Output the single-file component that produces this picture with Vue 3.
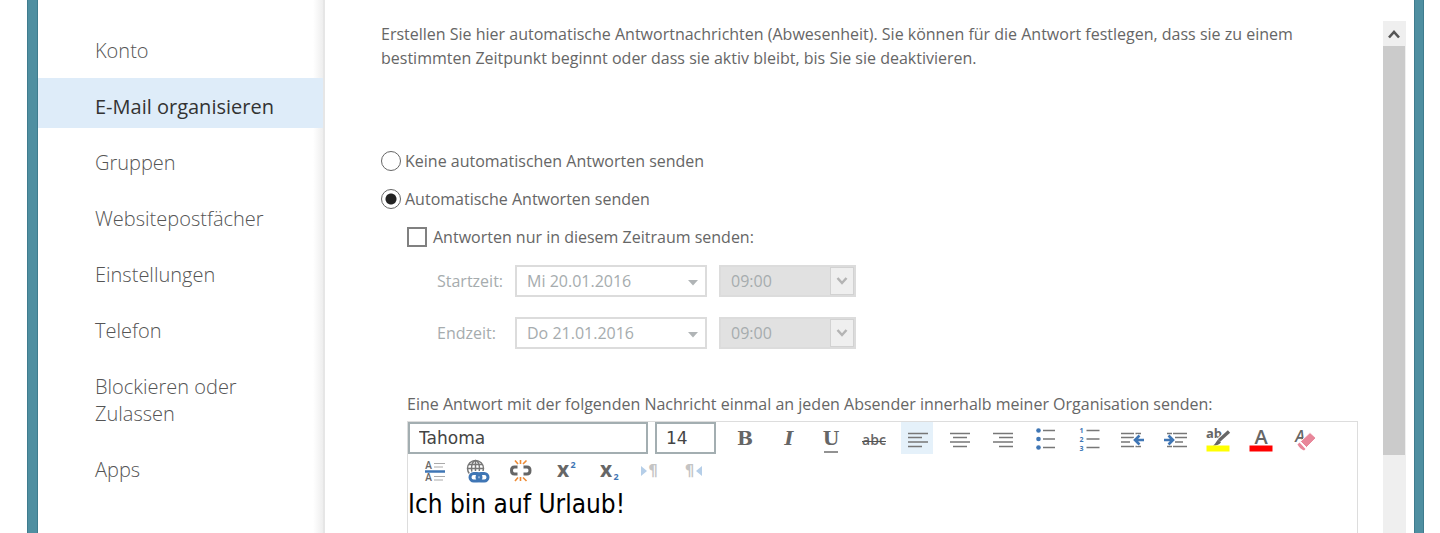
<script setup>
import { ref } from 'vue'

const navItems = [
  { id: 'konto', label: 'Konto' },
  { id: 'organisieren', label: 'E-Mail organisieren' },
  { id: 'gruppen', label: 'Gruppen' },
  { id: 'website', label: 'Websitepostfächer' },
  { id: 'einstellungen', label: 'Einstellungen' },
  { id: 'telefon', label: 'Telefon' },
  { id: 'blockieren', label: 'Blockieren oder Zulassen' },
  { id: 'apps', label: 'Apps' },
]

const tools = [
  { icon: 'bold', title: 'Fett' },
  { icon: 'italic', title: 'Kursiv' },
  { icon: 'underline', title: 'Unterstrichen' },
  { icon: 'strike', title: 'Durchgestrichen' },
  { icon: 'left', title: 'Linksbündig' },
  { icon: 'center', title: 'Zentriert' },
  { icon: 'right', title: 'Rechtsbündig' },
  { icon: 'bullets', title: 'Aufzählung' },
  { icon: 'numbers', title: 'Nummerierung' },
  { icon: 'outdent', title: 'Einzug verkleinern' },
  { icon: 'indent', title: 'Einzug vergrößern' },
  { icon: 'highlight', title: 'Hervorheben' },
  { icon: 'color', title: 'Schriftfarbe' },
  { icon: 'eraser', title: 'Formatierung löschen' },
  { icon: 'rule', title: 'Horizontale Linie' },
  { icon: 'link', title: 'Link einfügen' },
  { icon: 'unlink', title: 'Link entfernen' },
  { icon: 'sup', title: 'Hochgestellt' },
  { icon: 'sub', title: 'Tiefgestellt' },
  { icon: 'ltr', title: 'Von links nach rechts', disabled: true },
  { icon: 'rtl', title: 'Von rechts nach links', disabled: true },
]

// Line groups of the paragraph icons
const linePaths = {
  left: 'M7 11.5h20M7 15.5h14M7 20h20M7 24.5h14',
  center: 'M6 11.5h20M9 15.5h14M6 20h20M9 24.5h14',
  right: 'M6 11.5h20M12 15.5h14M6 20h20M12 24.5h14',
  bullets: 'M13 8.5h12M13 17h12M13 25.5h12',
  numbers: 'M13.5 8.5h13M13.5 17h13M13.5 25.5h13',
  outdent: 'M5 11.5h13M19.5 11.5h5.5M5 15.5h13M5 20h9M5 24.5h13M19.5 24.5h5.5',
  indent: 'M8 11.5h5M14 11.5h14M16 15.5h12M16 20h8M8 24.5h5M14 24.5h14',
}

const active = ref('organisieren')
const mode = ref('auto')
const onlyPeriod = ref(false)
const align = ref('left')
const fontName = ref('Tahoma')
const fontSize = ref('14')

const periods = [
  { id: 'start', label: 'Startzeit:', date: 'Mi 20.01.2016', time: '09:00' },
  { id: 'end', label: 'Endzeit:', date: 'Do 21.01.2016', time: '09:00' },
]

function useTool(icon) {
  if (['left', 'center', 'right'].includes(icon)) align.value = icon
}
</script>

<template>
  <div class="window">
    <nav class="nav" aria-label="Optionen">
      <a
        v-for="item in navItems"
        :key="item.id"
        href="#"
        class="nav__item"
        :class="{ 'nav__item--active': item.id === active }"
        @click.prevent="active = item.id"
      >{{ item.label }}</a>
    </nav>

    <main class="content">
      <p class="intro">
        Erstellen Sie hier automatische Antwortnachrichten (Abwesenheit). Sie können für die Antwort festlegen, dass sie zu einem
        bestimmten Zeitpunkt beginnt oder dass sie aktiv bleibt, bis Sie sie deaktivieren.
      </p>

      <label class="choice">
        <input v-model="mode" type="radio" name="mode" value="none" class="radio" />
        Keine automatischen Antworten senden
      </label>
      <label class="choice">
        <input v-model="mode" type="radio" name="mode" value="auto" class="radio" />
        Automatische Antworten senden
      </label>

      <div class="details">
        <label class="choice choice--check">
          <input v-model="onlyPeriod" type="checkbox" class="check" />
          Antworten nur in diesem Zeitraum senden:
        </label>

        <div v-for="p in periods" :key="p.id" class="period">
          <label :for="p.id" class="period__label">{{ p.label }}</label>
          <span class="pick pick--date">
            <select :id="p.id" class="pick__field" :disabled="!onlyPeriod">
              <option>{{ p.date }}</option>
            </select>
            <svg class="pick__caret" width="12" height="6" viewBox="0 0 12 6" aria-hidden="true">
              <path d="M1 0h10L6 5.5z" fill="#b0b4b6" />
            </svg>
          </span>
          <span class="pick pick--time">
            <select class="pick__field" :aria-label="p.label + ' Uhrzeit'" :disabled="!onlyPeriod">
              <option>{{ p.time }}</option>
            </select>
            <span class="pick__arrow">
              <svg width="12" height="10" viewBox="0 0 12 10" aria-hidden="true">
                <path d="M1.5 2L6 7l4.5-5" fill="none" stroke="#b4b4b4" stroke-width="2.5" />
              </svg>
            </span>
          </span>
        </div>

        <p id="reply-label" class="reply-label">
          Eine Antwort mit der folgenden Nachricht einmal an jeden Absender innerhalb meiner Organisation senden:
        </p>

        <div class="editor">
          <div class="toolbar" role="toolbar" aria-label="Formatierung">
            <input v-model="fontName" class="combo combo--font" aria-label="Schriftart" />
            <input v-model="fontSize" class="combo combo--size" aria-label="Schriftgrad" />
            <button
              v-for="t in tools"
              :key="t.icon"
              type="button"
              class="tool"
              :class="{ 'tool--on': t.icon === align }"
              :title="t.title"
              :disabled="t.disabled"
              @click="useTool(t.icon)"
            >
              <svg width="32" height="32" viewBox="0 0 32 32" aria-hidden="true">
                <path v-if="linePaths[t.icon]" :d="linePaths[t.icon]" class="lines" />

                <text v-if="t.icon === 'bold'" x="16" y="23" class="slab">B</text>
                <text v-else-if="t.icon === 'italic'" x="17" y="23" class="slab slab--italic">I</text>
                <g v-else-if="t.icon === 'underline'">
                  <text x="16" y="23" class="slab">U</text>
                  <path d="M9 30h14" class="lines" />
                </g>
                <g v-else-if="t.icon === 'strike'">
                  <text x="16" y="23" class="abc">abc</text>
                  <path d="M4 19.5h24" stroke="#555" />
                </g>
                <g v-else-if="t.icon === 'bullets'" fill="#3f76b5">
                  <circle cx="8.5" cy="8.5" r="2.3" />
                  <circle cx="8.5" cy="17" r="2.3" />
                  <circle cx="8.5" cy="25.5" r="2.3" />
                </g>
                <g v-else-if="t.icon === 'numbers'" class="digits">
                  <text x="8.5" y="11">1</text>
                  <text x="8.5" y="20">2</text>
                  <text x="8.5" y="29">3</text>
                </g>
                <g v-else-if="t.icon === 'outdent'" fill="none" stroke-width="2.6">
                  <path d="M28 18H19M23.5 13.5L19 18l4.5 4.5" stroke="#fff" stroke-width="5" />
                  <path d="M28 18H19M23.5 13.5L19 18l4.5 4.5" stroke="#3f76b5" />
                </g>
                <path
                  v-else-if="t.icon === 'indent'"
                  d="M5 18h9M9.5 13.5L14 18l-4.5 4.5"
                  fill="none"
                  stroke="#3f76b5"
                  stroke-width="2.6"
                />
                <g v-else-if="t.icon === 'highlight'">
                  <text x="12" y="16" class="ab">ab</text>
                  <path d="M27 9L16 19" stroke="#fff" stroke-width="5" />
                  <path d="M27 9.5L17 18.5" stroke="#666" stroke-width="3.4" />
                  <path d="M16 17.5l3 3c-2 2.500-5 3-8 3 2-1 3-4 5-6z" fill="#666" />
                  <path d="M4.5 23.5h23v6h-23z" fill="#ff0" />
                </g>
                <g v-else-if="t.icon === 'color'">
                  <text x="16" y="22" class="big-a">A</text>
                  <path d="M4.5 23.5h23v6h-23z" fill="#f00" />
                </g>
                <g v-else-if="t.icon === 'eraser'">
                  <text x="12" y="20" class="slant-a">A</text>
                  <path d="M22 10.5l6 5.5-9.5 9.5-6-6z" fill="#e8879a" stroke="#fff" />
                  <path d="M11.5 20.5l6 6.5-1.5 1.5c-2.500-1-5-3-6.500-6z" fill="#e8879a" />
                </g>
                <g v-else-if="t.icon === 'rule'">
                  <text x="9.5" y="13.5" class="tiny-a">A</text>
                  <text x="9.5" y="26" class="tiny-a">A</text>
                  <path d="M15 8.5h11M15 12h9M15 21.5h11M15 25h9" stroke="#aaa" />
                  <path d="M6 16.5h20" stroke="#3f76b5" stroke-width="2.5" />
                </g>
                <g v-else-if="t.icon === 'link'" fill="none">
                  <g stroke="#777" stroke-width="1.5">
                    <circle cx="13.5" cy="13.5" r="8" />
                    <ellipse cx="13.5" cy="13.5" rx="4" ry="8" />
                    <path d="M13.5 5.5v16M7 9.5h13M5.500 13.5h16" />
                  </g>
                  <rect x="6" y="16" width="22" height="12" rx="6" fill="#fff" />
                  <g stroke="#3f76b5" stroke-width="3">
                    <rect x="8" y="18.5" width="11" height="7.5" rx="3.7" />
                    <rect x="15" y="18.5" width="11" height="7.5" rx="3.7" />
                  </g>
                </g>
                <g v-else-if="t.icon === 'unlink'" fill="none">
                  <path d="M12.5 12H9.500Q6.500 12 6.500 15.500T9.500 19H12.500M18.500 12H22q3 0 3 3.500T22 19h-3.500" stroke="#666" stroke-width="3" />
                  <path d="M15.500 5v4M10 5.500l3 3.500M21.500 5.500L18 9M15.500 22v4M10 26l3-3.500M21.500 26L18 22.500" stroke="#ee8a33" stroke-width="1.6" />
                </g>
                <g v-else-if="t.icon === 'sup'">
                  <text x="15" y="21.5" class="letter-x">x</text>
                  <text x="25" y="13" class="digit">2</text>
                </g>
                <g v-else-if="t.icon === 'sub'">
                  <text x="15" y="21.5" class="letter-x">x</text>
                  <text x="25" y="25" class="digit">2</text>
                </g>
                <g v-else-if="t.icon === 'ltr'">
                  <path d="M7 11l6 5-6 5z" fill="#b5cee8" />
                  <text x="19" y="21" class="pilcrow">¶</text>
                </g>
                <g v-else-if="t.icon === 'rtl'">
                  <path d="M25 11l-6 5 6 5z" fill="#b5cee8" />
                  <text x="12.5" y="21" class="pilcrow">¶</text>
                </g>
              </svg>
            </button>
          </div>
          <div class="message" contenteditable="true" role="textbox" aria-multiline="true" aria-labelledby="reply-label">Ich bin auf Urlaub!</div>
        </div>
      </div>
    </main>

    <div class="scroll">
      <button type="button" class="scroll__up" aria-label="Nach oben">
        <svg width="12" height="10" viewBox="0 0 12 10" aria-hidden="true">
          <path d="M1 8.5L6 3l5 5.5" fill="none" stroke="#555" stroke-width="2.6" />
        </svg>
      </button>
      <div class="scroll__thumb" />
      <div class="scroll__rest" />
    </div>
  </div>
</template>

<style>
body {
  background: #fff;
}
</style>

<style scoped>
.window {
  box-sizing: border-box;
  display: flex;
  min-height: 100vh;
  margin: 0 16px 0 27px;
  border: solid #3f7c8e;
  border-width: 0 1px;
  box-shadow: inset 9px 0 #4f8fa1, inset 10px 0 #3f7c8e, inset -8px 0 #4f8fa1, inset -9px 0 #3f7c8e;
  padding: 0 9px 0 10px;
  background: #fff;
  font-family: 'Open Sans', 'Noto Sans', sans-serif;
  font-size: 16px;
  line-height: 24px;
  color: #666;
}

.nav {
  box-sizing: border-box;
  flex: 0 0 287px;
  display: flex;
  flex-direction: column;
  gap: 6px;
  padding-top: 22px;
  border-right: 2px solid #e6e6e6;
  background: linear-gradient(to left, #eee, #fff 10px);
}

.nav__item {
  padding: 15px 30px 8px 57px;
  font-size: 20px;
  font-weight: 300;
  line-height: 27px;
  color: #555;
  text-decoration: none;
}

.nav__item--active {
  background: #deecf9;
  font-weight: 400;
  color: #333;
}

.content {
  flex: 1;
  display: flex;
  flex-direction: column;
  min-width: 0;
  padding: 22px 25px 0 56px;
}

.intro {
  margin: 0 0 79px;
}

.choice {
  display: flex;
  align-items: center;
  gap: 4px;
  margin-bottom: 14px;
}

.choice--check {
  gap: 6px;
  margin-bottom: 16px;
}

.radio,
.check {
  box-sizing: border-box;
  appearance: none;
  width: 20px;
  height: 20px;
  margin: 0;
  border: 2px solid #808080;
  background: #fff;
}

.radio {
  border-width: 1px;
  border-color: #666;
  border-radius: 50%;
}

.radio:checked {
  background: radial-gradient(circle, #222 5px, #fff 6px);
}

.details {
  flex: 1;
  display: flex;
  flex-direction: column;
  padding-left: 26px;
}

.period {
  display: flex;
  align-items: center;
  gap: 12px;
  margin: 0 0 20px 30px;
  color: #a6acae;
}

.period__label {
  flex: 0 0 66px;
}

.pick {
  display: grid;
  align-items: center;
  height: 32px;
}

.pick--date {
  width: 192px;
}

.pick--time {
  width: 137px;
}

.pick__field {
  box-sizing: border-box;
  grid-area: 1 / 1;
  appearance: none;
  width: 100%;
  height: 32px;
  padding: 0 10px;
  border: 2px solid #dcdcdc;
  border-radius: 0;
  background: #fff;
  font: inherit;
  color: #a6acae;
  opacity: 1;
}

.pick--time .pick__field {
  background: #e1e1e1;
}

.pick__caret,
.pick__arrow {
  grid-area: 1 / 1;
  justify-self: end;
  pointer-events: none;
}

.pick__caret {
  margin: 4px 8px 0 0;
}

.pick__arrow {
  box-sizing: border-box;
  display: grid;
  place-items: center;
  width: 24px;
  height: 28px;
  margin-right: 2px;
  border: 1px solid #d2d2d2;
  background: #efefef;
}

.reply-label {
  margin: 23px 0 5px;
  padding-top: 20px;
  margin-top: 3px;
}

.editor {
  flex: 1;
  border: solid #ddd;
  border-width: 1px 1px 0;
}

.toolbar {
  display: flex;
  flex-wrap: wrap;
  row-gap: 1px;
}

.combo {
  box-sizing: border-box;
  height: 32px;
  padding: 0 9px;
  border: 2px solid #a3aeb1;
  border-radius: 0;
  background: #fff;
  font-family: 'DejaVu Sans', sans-serif;
  font-size: 17px;
  color: #444;
}

.combo--font {
  width: 240px;
  margin-right: 7px;
}

.combo--size {
  width: 61px;
  margin-right: 2px;
}

.tool {
  width: 32px;
  height: 32px;
  margin: 0 0 0 11px;
  padding: 0;
  border: 0;
  background: none;
}

.tool svg {
  display: block;
}

.tool--on {
  background: #e5f1fa;
}

.tool text {
  fill: #666;
  text-anchor: middle;
  font-family: 'Open Sans', sans-serif;
  font-weight: 700;
}

.lines {
  fill: none;
  stroke: #777;
  stroke-width: 1.6;
}

.tool .slab {
  font-family: 'DejaVu Serif', serif;
  font-size: 19px;
}

.tool .slab--italic {
  font-style: italic;
}

.tool .abc {
  font-size: 14px;
  font-weight: 600;
}

.tool .ab {
  font-size: 13px;
}

.tool .big-a {
  font-size: 20px;
  font-weight: 600;
}

.tool .slant-a {
  font-size: 16px;
  font-style: italic;
  font-weight: 600;
}

.tool .tiny-a {
  font-size: 10px;
  font-weight: 600;
}

.tool .digits text {
  font-size: 7px;
  fill: #3f76b5;
}

.tool .letter-x {
  font-size: 21px;
}

.tool .digit {
  font-size: 9px;
  fill: #3f76b5;
}

.tool .pilcrow {
  font-family: 'DejaVu Sans', sans-serif;
  font-size: 15px;
  fill: #c4c4c4;
}

.message {
  font-family: 'DejaVu Sans Condensed', 'DejaVu Sans', sans-serif;
  font-size: 26px;
  line-height: 34px;
  color: #000;
  outline: none;
}

.scroll {
  display: flex;
  flex-direction: column;
  width: 23px;
  margin: 21px 8px 0 0;
  background: #efefef;
}

.scroll__up {
  display: grid;
  place-items: center;
  height: 25px;
  padding: 0 2px 0 0;
  border: 0;
  background: none;
}

.scroll__thumb {
  flex: 84;
  margin-right: 1px;
  background: #cbcbcb;
}

.scroll__rest {
  flex: 16;
}
</style>
